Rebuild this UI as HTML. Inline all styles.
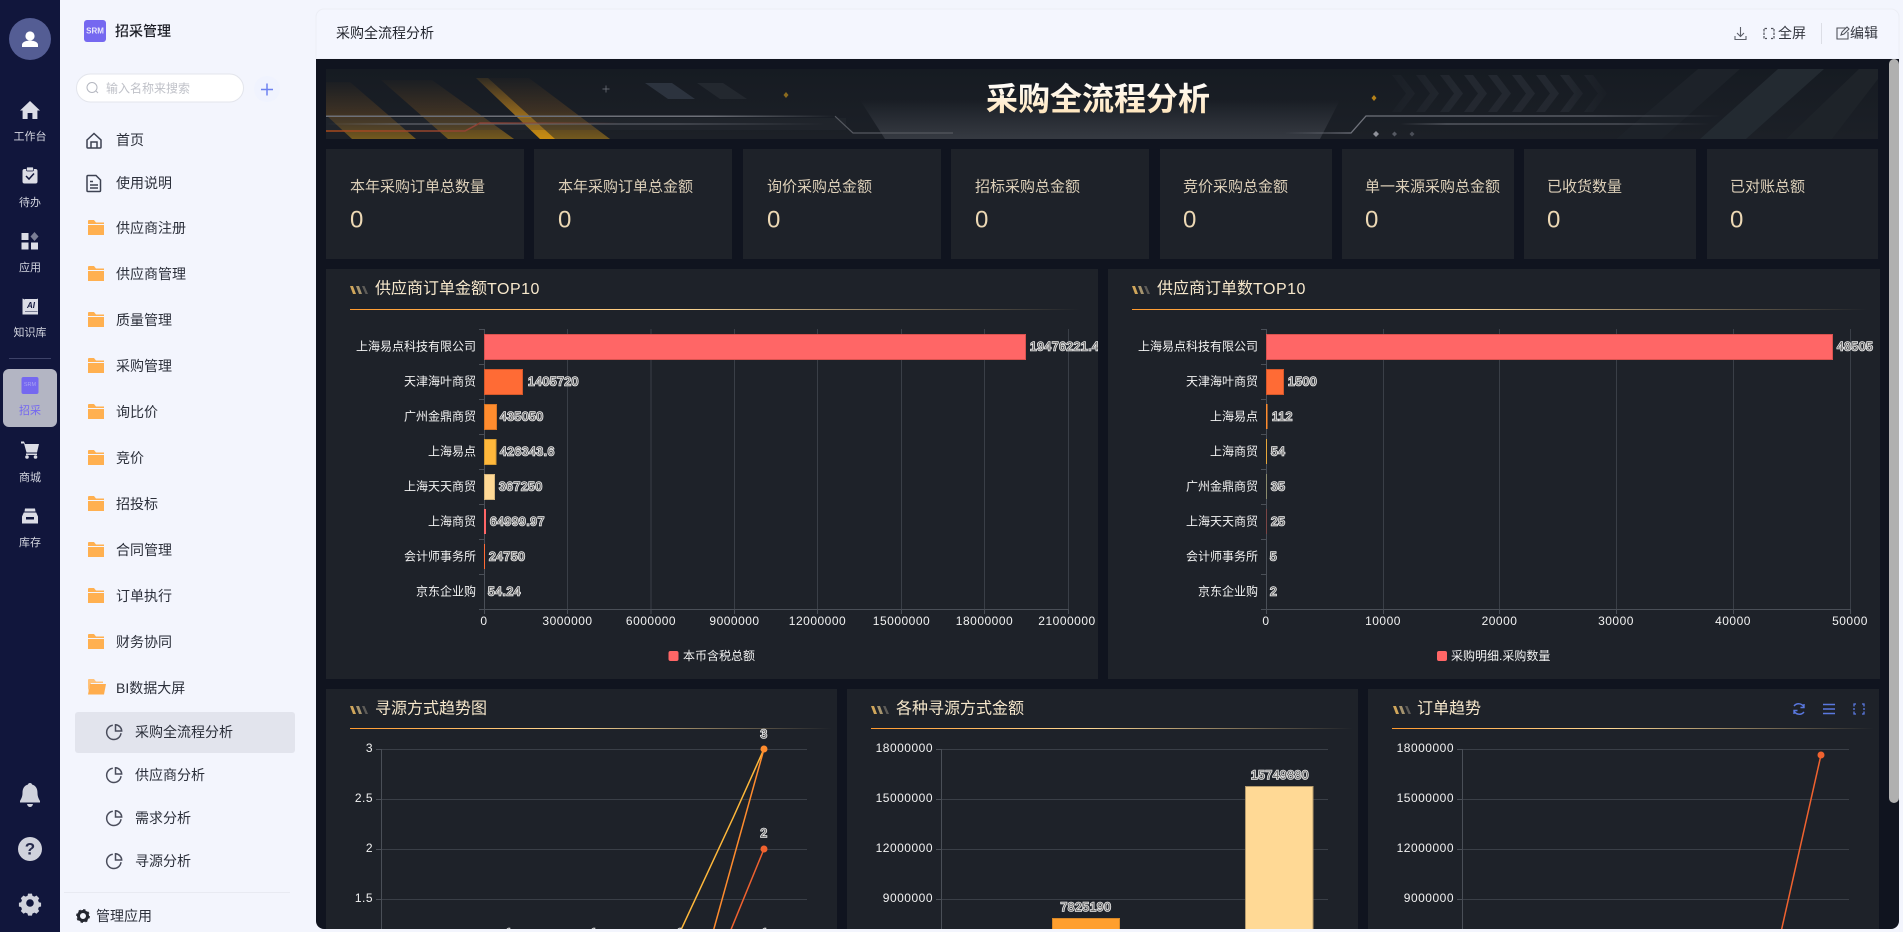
<!DOCTYPE html>
<html lang="zh-CN"><head><meta charset="utf-8"><title>采购全流程分析</title>
<style>
html,body{margin:0;padding:0;width:1903px;height:932px;overflow:hidden;background:#f3f5fd}
svg{display:block;font-family:"Liberation Sans","Noto Sans CJK SC",sans-serif}
text{dominant-baseline:central}
.rl{font-size:11px;fill:#d4d6e0;text-anchor:middle}
.m{font-size:14px;fill:#2b2f3a}
.cl{font-size:15px;fill:#dccfb8}
.cv{font-size:24px;fill:#ecd8b4}
.pt{font-size:16px;fill:#f7e8cc}
.al{font-size:12px;fill:#f2f2f2;text-anchor:end}
.ax{font-size:12px;fill:#f2f2f2;text-anchor:middle;letter-spacing:.5px}
.n{letter-spacing:.5px}
.v{font-size:12px;fill:#666;stroke:#eee;stroke-width:1.6px;paint-order:stroke;letter-spacing:.6px}
.c{text-anchor:middle}
.g{stroke:#3a3f47;stroke-width:1;fill:none}
.h{font-size:14px;fill:#33363f}
</style></head><body>
<svg width="1903" height="932" viewBox="0 0 1903 932" xmlns="http://www.w3.org/2000/svg">
<defs>
<symbol id="fo" viewBox="0 0 16 15" overflow="visible"><path d="M0 1a1 1 0 0 1 1-1h5l2 2.5h8V4H0z" fill="#ffb050"/><rect y="5" width="16" height="10" fill="#ffb050"/></symbol>
<symbol id="pi" viewBox="0 0 16 16" overflow="visible"><g fill="none" stroke="#4a4d5c" stroke-width="1.5"><path d="M6.8 1.2A7.2 7.2 0 1 0 15 9.2"/><path d="M9.5.8v6.2h6.2A6.4 6.4 0 0 0 9.5.8z"/></g></symbol>
<symbol id="ti" viewBox="0 0 19 8" overflow="visible"><path d="M0 0h3l3 8H3z" fill="#d0a65a"/><path d="M6 0h3l3 8H9z" fill="#a5946f"/><path d="M12 0h2.5l3.5 8h-2.5z" fill="#5e5c58"/></symbol>
<linearGradient id="ln" x1="0" x2="1" y1="0" y2="0"><stop offset="0" stop-color="#ff9a2e"/><stop offset=".45" stop-color="#ffd995"/><stop offset="1" stop-color="#ffd995" stop-opacity="0"/></linearGradient>
<linearGradient id="am" x1="0" x2="0" y1="0" y2="1"><stop offset="0" stop-color="#8a5a20" stop-opacity=".04"/><stop offset=".55" stop-color="#8a5a20" stop-opacity=".32"/><stop offset="1" stop-color="#96701a" stop-opacity=".72"/></linearGradient>
<linearGradient id="am2" x1="0" x2="0" y1="0" y2="1"><stop offset="0" stop-color="#c98a20" stop-opacity=".12"/><stop offset="1" stop-color="#d9960f" stop-opacity=".85"/></linearGradient>
<linearGradient id="gl" x1="0" x2="0" y1="0" y2="1"><stop offset="0" stop-color="#3c4149" stop-opacity="0"/><stop offset="1" stop-color="#3a3e46" stop-opacity=".85"/></linearGradient>
<linearGradient id="fr" x1="0" x2="1" y1="0" y2="0"><stop offset="0" stop-color="#6d7078"/><stop offset=".75" stop-color="#6d7078"/><stop offset="1" stop-color="#6d7078" stop-opacity="0"/></linearGradient>
<linearGradient id="fl" x1="0" x2="1" y1="0" y2="0"><stop offset="0" stop-color="#70737c" stop-opacity="0"/><stop offset=".15" stop-color="#70737c"/><stop offset=".7" stop-color="#62656e"/><stop offset="1" stop-color="#62656e" stop-opacity="0"/></linearGradient>
<linearGradient id="rd" x1="0" x2="1" y1="0" y2="0"><stop offset="0" stop-color="#a84a1c"/><stop offset=".5" stop-color="#8f4234"/><stop offset="1" stop-color="#8f4234" stop-opacity="0"/></linearGradient>
<linearGradient id="tc" x1="0" x2="0" y1="0" y2="1"><stop offset="0" stop-color="#fff"/><stop offset="1" stop-color="#ffe3b5"/></linearGradient>
<linearGradient id="sh" x1="0" x2="0" y1="0" y2="1"><stop offset="0" stop-color="#161b22"/><stop offset="1" stop-color="#1c2027"/></linearGradient>
<linearGradient id="chv" x1="0" x2="1" y1="0" y2="0"><stop offset="0" stop-color="#262b33" stop-opacity=".2"/><stop offset=".3" stop-color="#262b33" stop-opacity=".8"/><stop offset=".8" stop-color="#262b33" stop-opacity=".8"/><stop offset="1" stop-color="#262b33" stop-opacity=".1"/></linearGradient>
<clipPath id="mc"><path d="M316 59H1899V921a8 8 0 0 1-8 8H324a8 8 0 0 1-8-8z"/></clipPath>
<clipPath id="p1"><rect x="326" y="269" width="772" height="410"/></clipPath>
<clipPath id="bn"><rect x="326" y="69" width="1552" height="70"/></clipPath>
</defs>

<!-- rail -->
<rect width="60" height="932" fill="#11163c"/>
<circle cx="30" cy="39" r="21" fill="#545d94"/>
<circle cx="30" cy="36" r="4.6" fill="#fff"/><path d="M22 47v-2.2c0-2.6 3.5-4.2 8-4.2s8 1.6 8 4.2V47z" fill="#fff"/>
<path d="M30 101l10 9.5h-2.6V119h-5v-6h-4.8v6h-5v-8.500H20z" fill="#dcdde6"/>
<text class="rl" x="30" y="137">工作台</text>
<rect x="22.500" y="169" width="15" height="14.500" rx="2" fill="#dcdde6"/><rect x="26.500" y="167" width="7" height="4" rx="1" fill="#dcdde6" stroke="#11163c" stroke-width=".7"/><path d="M26 176l3 3 5-5.500" fill="none" stroke="#11163c" stroke-width="1.500"/>
<text class="rl" x="30" y="203">待办</text>
<rect x="21.500" y="233" width="7" height="7" fill="#dcdde6"/><rect x="21.500" y="242.500" width="7" height="7" fill="#dcdde6"/><rect x="31" y="242.500" width="7" height="7" fill="#dcdde6"/><path d="M34.500 232l4 4.500-4 4.500-4-4.500z" fill="#7b7e95"/>
<text class="rl" x="30" y="268">应用</text>
<path d="M22.500 298.500l2.500 1v12h12.500v-13h.5v16H22.500z" fill="#dcdde6"/><rect x="25" y="299" width="12.500" height="12" fill="#dcdde6"/><text x="31" y="305.500" font-size="8" font-weight="700" font-style="italic" fill="#11163c" text-anchor="middle">AI</text>
<text class="rl" x="30" y="333">知识库</text>
<rect x="9" y="358" width="42" height="1" fill="#3d4268"/>
<rect x="3" y="369" width="54" height="58" rx="6" fill="#b3b5c3"/>
<rect x="21.500" y="377" width="17" height="17" rx="2" fill="#7568f0"/><text x="30" y="385" font-size="5.500" fill="#a9a4f2" text-anchor="middle">SRM</text>
<text class="rl" x="30" y="411" style="fill:#7568f0">招采</text>
<path d="M21 441.500h3l1 2.500h14l-2 8.500H26.500l-2.500-9H21z" fill="#dcdde6"/><circle cx="27" cy="457" r="1.800" fill="#dcdde6"/><circle cx="35.500" cy="457" r="1.800" fill="#dcdde6"/><rect x="26" y="453.500" width="11" height="1.500" fill="#dcdde6"/>
<text class="rl" x="30" y="478">商城</text>
<path d="M25 508.500h10l.5 3h-11zM23.800 512.500h12.400l1.800 4v7H22v-7zM26 517v2.500h8V517h-8z" fill="#dcdde6" fill-rule="evenodd"/>
<text class="rl" x="30" y="543">库存</text>
<path d="M30 783c-1.500 0-2 1-2 1.500-3.800 1-5.500 4-5.500 8.500 0 4-1.500 6-2.500 8v1.500h20V801c-1-2-2.500-4-2.500-8 0-4.500-1.700-7.500-5.500-8.500 0-.5-.5-1.500-2-1.500z" fill="#d0d2dc"/><path d="M27 804h6c-.5 2-1.500 3-3 3s-2.500-1-3-3z" fill="#d0d2dc"/>
<circle cx="30" cy="849" r="12" fill="#d0d2dc"/><text x="30" y="849" font-size="17" font-weight="700" fill="#262a4c" text-anchor="middle">?</text>
<g fill="#d0d2dc"><path d="M27.500 892.500h5l.7 2.800 2.600 1.100 2.500-1.500 3.500 3.500-1.500 2.500 1.100 2.600 2.800.7v4.800l-2.800.7-1.100 2.600 1.500 2.500-3.500 3.500-2.500-1.500-2.600 1.100-.7 2.800h-5l-.7-2.800-2.600-1.100-2.500 1.500-3.500-3.500 1.500-2.500-1.100-2.600-2.800-.7v-4.800l2.800-.7 1.100-2.600-1.500-2.500 3.500-3.500 2.500 1.500 2.600-1.100z" transform="translate(30 903) scale(.78) translate(-30 -904.500)"/></g><circle cx="30" cy="903" r="3.800" fill="#11163c"/>

<!-- sidebar -->
<rect x="60" width="256" height="932" fill="#f3f5fd"/>
<rect x="84" y="20" width="22" height="22" rx="3" fill="#7568f0"/><text x="95" y="31" font-size="8" font-weight="700" fill="#e8e6fc" text-anchor="middle">SRM</text>
<text x="115" y="31" font-size="14" fill="#1c1e26" font-weight="500">招采管理</text>
<rect x="76.500" y="74" width="167" height="28" rx="14" fill="#fff" stroke="#e3e5ec"/>
<circle cx="92" cy="87.500" r="5" fill="none" stroke="#b4b7c0" stroke-width="1"/><path d="M96 91l2 2" stroke="#b4b7c0"/>
<text x="106" y="88.500" font-size="12" fill="#bfc1c8">输入名称来搜索</text>
<circle cx="267" cy="89" r="13" fill="#f0f3fe"/><path d="M261 89.500h12M267 83.500v12" stroke="#6d82f0" stroke-width="1.500"/>
<path d="M87 140l7-6.500 7 6.500v7a1 1 0 0 1-1 1h-12a1 1 0 0 1-1-1z M91 148v-6h6v6" fill="none" stroke="#3d4252" stroke-width="1.500"/>
<text class="m" x="116" y="140">首页</text>
<path d="M88 176h8l4.500 4.500v10.500a1 1 0 0 1-1 1h-11.500a1 1 0 0 1-1-1v-14a1 1 0 0 1 1-1zM90 182h3M90 185.500h8M90 188.500h8" fill="none" stroke="#3d4252" stroke-width="1.500" transform="translate(0 -.500)"/>
<text class="m" x="116" y="183">使用说明</text>
<use href="#fo" x="88" y="220" width="16" height="15"/><text class="m" x="116" y="228">供应商注册</text>
<use href="#fo" x="88" y="266" width="16" height="15"/><text class="m" x="116" y="274">供应商管理</text>
<use href="#fo" x="88" y="312" width="16" height="15"/><text class="m" x="116" y="320">质量管理</text>
<use href="#fo" x="88" y="358" width="16" height="15"/><text class="m" x="116" y="366">采购管理</text>
<use href="#fo" x="88" y="404" width="16" height="15"/><text class="m" x="116" y="412">询比价</text>
<use href="#fo" x="88" y="450" width="16" height="15"/><text class="m" x="116" y="458">竞价</text>
<use href="#fo" x="88" y="496" width="16" height="15"/><text class="m" x="116" y="504">招投标</text>
<use href="#fo" x="88" y="542" width="16" height="15"/><text class="m" x="116" y="550">合同管理</text>
<use href="#fo" x="88" y="588" width="16" height="15"/><text class="m" x="116" y="596">订单执行</text>
<use href="#fo" x="88" y="634" width="16" height="15"/><text class="m" x="116" y="642">财务协同</text>
<path d="M88 680a1 1 0 0 1 1-1h5l2 2.500h7v1.500H91l-3 8z" fill="#ffc27a"/><path d="M90 684h16l-2 10.500H88z" fill="#ffad4d"/>
<text class="m" x="116" y="688">BI数据大屏</text>
<rect x="75" y="712" width="220" height="41" rx="3" fill="#e2e4ed"/>
<use href="#pi" x="106" y="724" width="16" height="16"/><text class="m" x="135" y="732">采购全流程分析</text>
<use href="#pi" x="106" y="767" width="16" height="16"/><text class="m" x="135" y="775">供应商分析</text>
<use href="#pi" x="106" y="810" width="16" height="16"/><text class="m" x="135" y="818">需求分析</text>
<use href="#pi" x="106" y="853" width="16" height="16"/><text class="m" x="135" y="861">寻源分析</text>
<rect x="64" y="892" width="226" height="1" fill="#e8eaf2"/>
<circle cx="83" cy="916" r="4.500" fill="none" stroke="#23262f" stroke-width="3"/><circle cx="83" cy="916" r="6" fill="none" stroke="#23262f" stroke-width="1.800" stroke-dasharray="2.300 2.400"/>
<text class="m" x="96" y="916">管理应用</text>

<!-- header -->
<path d="M316 59V17a8 8 0 0 1 8-8h1567a8 8 0 0 1 8 8v42z" fill="#f4f6fe" stroke="#eceef5"/>
<text class="h" x="336" y="33" style="fill:#23262f">采购全流程分析</text>
<path d="M1740.500 27v9M1737 33l3.500 3.500 3.500-3.500M1735 36v3.500h11V36" fill="none" stroke="#5c5f68" stroke-width="1.100"/>
<path d="M1767 28.500h-3v10h3M1771 28.500h3v10h-3" fill="none" stroke="#4f525b" stroke-width="1.200" stroke-dasharray="2.500 1"/>
<text class="h" x="1778" y="33">全屏</text>
<rect x="1821" y="23" width="1" height="21" fill="#dcdee6"/>
<path d="M1846 28h-9v11h11v-7M1841 35l1-3 5-5 2 2-5 5z" fill="none" stroke="#4f525b" stroke-width="1.100"/>
<text class="h" x="1850" y="33">编辑</text>

<!-- main -->
<g clip-path="url(#mc)">
<rect x="316" y="59" width="1583" height="870" fill="#10141f"/>
<rect x="326" y="69" width="1552" height="70" fill="url(#sh)"/>
<g clip-path="url(#bn)">
<path d="M326 82h24l66 57h-64l-26-24z" fill="url(#am)"/>
<path d="M381 80h51l82 59h-66z" fill="url(#am)"/>
<path d="M476 78h53l81 61h-70z" fill="url(#am)"/>
<path d="M476 78h12l67 61h-15z" fill="url(#am2)"/>
<path d="M860 100h480l-20 39H885z" fill="url(#gl)"/>
<path d="M645 83h27l23 16h-27z" fill="#2c333e"/><path d="M697 83h26l24 16h-27z" fill="#23282f"/>
<path d="M606 85.500v7M602.500 89h7" stroke="#777a83" stroke-width=".7"/>
<path d="M786 92l2.500 3-2.500 3-2.500-3z" fill="#8a6a1e"/><path d="M1374 95l2.500 3-2.500 3-2.500-3z" fill="#b5821a"/>
<path d="M1376 131l3 3-3 3-3-3z" fill="#8f929a"/><path d="M1394.500 131.500l2.500 2.500-2.500 2.500-2.500-2.500z" fill="#555962"/><path d="M1412 131.500l2.500 2.500-2.500 2.500-2.500-2.500z" fill="#4a4e57"/>
<path d="M1392 75l14 18.500-14 18.500h9l14-18.500-14-18.500zM1416 75l14 18.500-14 18.500h9l14-18.500-14-18.500zM1440 75l14 18.500-14 18.500h9l14-18.500-14-18.500zM1464 75l14 18.500-14 18.500h9l14-18.500-14-18.500zM1488 75l14 18.500-14 18.500h9l14-18.500-14-18.500zM1512 75l14 18.500-14 18.500h9l14-18.500-14-18.500zM1536 75l14 18.500-14 18.500h9l14-18.500-14-18.500zM1560 75l14 18.500-14 18.500h9l14-18.500-14-18.500zM1584 75l14 18.500-14 18.500h9l14-18.500-14-18.500z" fill="url(#chv)"/>
<path d="M1698 69h42l-78 70h-46z" fill="#1d2229"/><path d="M1778 69h46l-78 70h-46z" fill="#232a31"/><path d="M1859 69h19v10l-46 60h-46z" fill="#1e2329"/>
<rect x="326" y="118" width="520" height="12" fill="#2e323a" opacity=".25"/>
<rect x="326" y="115.500" width="509" height="1.500" fill="url(#fr)"/>
<path d="M835 116.200l18 16.800h100" fill="none" stroke="#55585f" stroke-width="1.200"/>
<rect x="326" y="123.500" width="500" height="1" fill="url(#fl)"/>
<path d="M326 131h139l15-8h140" fill="none" stroke="url(#rd)" stroke-width="1.500"/>
<path d="M1284 133h67l15-17h355" fill="none" stroke="url(#fl)" stroke-width="1.300"/>
<rect x="1400" y="123.500" width="310" height="1" fill="url(#fl)"/>
</g>
<text x="1098" y="99" font-size="32" font-weight="700" fill="url(#tc)" text-anchor="middle">采购全流程分析</text>

<!-- cards -->
<g fill="#1e2229">
<rect x="326" y="149" width="198" height="110"/><rect x="534" y="149" width="198" height="110"/><rect x="743" y="149" width="198" height="110"/><rect x="951" y="149" width="198" height="110"/><rect x="1160" y="149" width="172" height="110"/><rect x="1342" y="149" width="172" height="110"/><rect x="1524" y="149" width="172" height="110"/><rect x="1707" y="149" width="171" height="110"/>
</g>
<text class="cl" x="350" y="187">本年采购订单总数量</text><text class="cv" x="350" y="220">0</text>
<text class="cl" x="558" y="187">本年采购订单总金额</text><text class="cv" x="558" y="220">0</text>
<text class="cl" x="767" y="187">询价采购总金额</text><text class="cv" x="767" y="220">0</text>
<text class="cl" x="975" y="187">招标采购总金额</text><text class="cv" x="975" y="220">0</text>
<text class="cl" x="1183" y="187">竞价采购总金额</text><text class="cv" x="1183" y="220">0</text>
<text class="cl" x="1365" y="187">单一来源采购总金额</text><text class="cv" x="1365" y="220">0</text>
<text class="cl" x="1547" y="187">已收货数量</text><text class="cv" x="1547" y="220">0</text>
<text class="cl" x="1730" y="187">已对账总额</text><text class="cv" x="1730" y="220">0</text>

<!-- panel 1 -->
<rect x="326" y="269" width="772" height="410" fill="#1e2229"/>
<use href="#ti" x="350" y="286" width="19" height="8"/>
<text class="pt" x="375" y="289">供应商订单金额<tspan letter-spacing=".5">TOP10</tspan></text>
<rect x="350" y="309" width="730" height="1" fill="url(#ln)"/>
<g clip-path="url(#p1)">
<path class="g" d="M567.500 329v280M651 329v280M734.500 329v280M817.500 329v280M901.500 329v280M984.500 329v280M1068.500 329v280"/>
<path d="M484.500 329v280M484 609.500h585M479 329.500h5M479 364.500h5M479 399.500h5M479 434.500h5M479 469.500h5M479 504.500h5M479 539.500h5M479 574.500h5M479 609.500h5M484.500 609v5M567.500 609v5M651 609v5M734.500 609v5M817.500 609v5M901.500 609v5M984.500 609v5M1068.500 609v5" stroke="#4a4f57" fill="none"/>
<rect x="484.500" y="334.500" width="541" height="25" fill="#ff6666" stroke="#d9534f"/>
<rect x="484.500" y="369.500" width="38" height="25" fill="#ff6b35" stroke="#d4592b"/>
<rect x="484.500" y="404.500" width="12" height="25" fill="#ff8c2e" stroke="#d77626"/>
<rect x="484.500" y="439.500" width="11.500" height="25" fill="#ffb83b" stroke="#d59a32"/>
<rect x="484.500" y="474.500" width="10" height="25" fill="#ffd995" stroke="#d6b67d"/>
<rect x="484" y="509" width="2" height="25" fill="#ff6666"/>
<rect x="484" y="544" width="1" height="25" fill="#ff6b35"/>
<text class="al" x="476" y="346.500">上海易点科技有限公司</text><text class="al" x="476" y="381.500">天津海叶商贸</text><text class="al" x="476" y="416.500">广州金鼎商贸</text><text class="al" x="476" y="451.500">上海易点</text><text class="al" x="476" y="486.500">上海天天商贸</text><text class="al" x="476" y="521.500">上海商贸</text><text class="al" x="476" y="556.500">会计师事务所</text><text class="al" x="476" y="591.500">京东企业购</text>
<text class="v" x="1030" y="346.500">19476221.4</text><text class="v" x="528" y="381.500">1405720</text><text class="v" x="500" y="416.500">435050</text><text class="v" x="500" y="451.500">426343.6</text><text class="v" x="499" y="486.500">367250</text><text class="v" x="490" y="521.500">64999.97</text><text class="v" x="489" y="556.500">24750</text><text class="v" x="488" y="591.500">54.24</text>
<text class="ax" x="484" y="621">0</text><text class="ax" x="567.500" y="621">3000000</text><text class="ax" x="651" y="621">6000000</text><text class="ax" x="734.500" y="621">9000000</text><text class="ax" x="817.500" y="621">12000000</text><text class="ax" x="901.500" y="621">15000000</text><text class="ax" x="984.500" y="621">18000000</text><text class="ax" x="1067" y="621">21000000</text>
<rect x="668.500" y="651" width="10" height="10" rx="2" fill="#ff6666"/><text x="683" y="656" font-size="12" fill="#f2f2f2">本币含税总额</text>
</g>

<!-- panel 2 -->
<rect x="1108" y="269" width="772" height="410" fill="#1e2229"/>
<use href="#ti" x="1132" y="286" width="19" height="8"/>
<text class="pt" x="1157" y="289">供应商订单数<tspan letter-spacing=".5">TOP10</tspan></text>
<rect x="1132" y="309" width="735" height="1" fill="url(#ln)"/>
<path class="g" d="M1383.500 329v280M1499.500 329v280M1616.500 329v280M1733.500 329v280M1850.500 329v280"/>
<path d="M1266.500 329v280M1266 609.500h585M1261 329.500h5M1261 364.500h5M1261 399.500h5M1261 434.500h5M1261 469.500h5M1261 504.500h5M1261 539.500h5M1261 574.500h5M1261 609.500h5M1266.500 609v5M1383.500 609v5M1499.500 609v5M1616.500 609v5M1733.500 609v5M1850.500 609v5" stroke="#4a4f57" fill="none"/>
<rect x="1266.500" y="334.500" width="566" height="25" fill="#ff6666" stroke="#d9534f"/>
<rect x="1266.500" y="369.500" width="17" height="25" fill="#ff6b35" stroke="#d4592b"/>
<rect x="1266" y="404" width="1.500" height="25" fill="#ff8c2e"/>
<rect x="1266" y="439" width="1" height="25" fill="#e6a73a"/>
<rect x="1266" y="474" width="1" height="25" fill="#8a8a6c"/>
<rect x="1266" y="509" width="1" height="25" fill="#7a4545"/>
<text class="al" x="1258" y="346.500">上海易点科技有限公司</text><text class="al" x="1258" y="381.500">天津海叶商贸</text><text class="al" x="1258" y="416.500">上海易点</text><text class="al" x="1258" y="451.500">上海商贸</text><text class="al" x="1258" y="486.500">广州金鼎商贸</text><text class="al" x="1258" y="521.500">上海天天商贸</text><text class="al" x="1258" y="556.500">会计师事务所</text><text class="al" x="1258" y="591.500">京东企业购</text>
<text class="v" x="1837" y="346.500">48505</text><text class="v" x="1288" y="381.500">1500</text><text class="v" x="1272" y="416.500">112</text><text class="v" x="1271" y="451.500">54</text><text class="v" x="1271" y="486.500">35</text><text class="v" x="1271" y="521.500">25</text><text class="v" x="1270" y="556.500">5</text><text class="v" x="1270" y="591.500">2</text>
<text class="ax" x="1266" y="621">0</text><text class="ax" x="1383" y="621">10000</text><text class="ax" x="1499.500" y="621">20000</text><text class="ax" x="1616" y="621">30000</text><text class="ax" x="1733" y="621">40000</text><text class="ax" x="1850" y="621">50000</text>
<rect x="1437" y="651" width="10" height="10" rx="2" fill="#ff6666"/><text x="1451" y="656" font-size="12" fill="#f2f2f2">采购明细.采购数量</text>

<!-- panel 3 -->
<rect x="326" y="689" width="511" height="245" fill="#1e2229"/>
<use href="#ti" x="350" y="706" width="19" height="8"/>
<text class="pt" x="375" y="709">寻源方式趋势图</text>
<rect x="350" y="728" width="482" height="1" fill="url(#ln)"/>
<path class="g" d="M381 749.500h426M381 799.500h426M381 849.500h426M381 899.500h426"/>
<path d="M381.500 749v190M376 749.500h5M376 799.500h5M376 849.500h5M376 899.500h5" stroke="#4a4f57" fill="none"/>
<text class="al n" x="373" y="748">3</text><text class="al n" x="373" y="798">2.5</text><text class="al n" x="373" y="848">2</text><text class="al n" x="373" y="898">1.5</text>
<path d="M764 749L733 818 680 932" fill="none" stroke="#ffb83b" stroke-width="1.500"/>
<path d="M764 749L713 932" fill="none" stroke="#ff8c2e" stroke-width="1.500"/>
<path d="M764 849L730 932" fill="none" stroke="#f0622f" stroke-width="1.500"/>
<circle cx="764" cy="749" r="3.500" fill="#ff8c2e"/><circle cx="764" cy="849" r="3.500" fill="#f0622f"/>
<text class="v c" x="764" y="734">3</text><text class="v c" x="764" y="833">2</text>
<text class="v c" x="509" y="933">1</text><text class="v c" x="594" y="933">1</text><text class="v c" x="680" y="933">1</text><text class="v c" x="765" y="933">1</text>

<!-- panel 4 -->
<rect x="847" y="689" width="511" height="245" fill="#1e2229"/>
<use href="#ti" x="871" y="706" width="19" height="8"/>
<text class="pt" x="896" y="709">各种寻源方式金额</text>
<rect x="871" y="728" width="482" height="1" fill="url(#ln)"/>
<path class="g" d="M941 749.500h387M941 799.500h387M941 849.500h387M941 899.500h387"/>
<path d="M941.500 749v190M936 749.500h5M936 799.500h5M936 849.500h5M936 899.500h5" stroke="#4a4f57" fill="none"/>
<text class="al n" x="933" y="748">18000000</text><text class="al n" x="933" y="798">15000000</text><text class="al n" x="933" y="848">12000000</text><text class="al n" x="933" y="898">9000000</text>
<rect x="1052.500" y="918.500" width="67" height="20" fill="#ff9f2e" stroke="#d98826"/>
<rect x="1245.500" y="786.500" width="67.500" height="150" fill="#ffd995" stroke="#b59a6c"/>
<text class="v c" x="1086" y="907">7825190</text><text class="v c" x="1280" y="775">15749880</text>

<!-- panel 5 -->
<rect x="1368" y="689" width="511" height="245" fill="#1e2229"/>
<use href="#ti" x="1393" y="706" width="19" height="8"/>
<text class="pt" x="1417" y="709">订单趋势</text>
<rect x="1392" y="728" width="482" height="1" fill="url(#ln)"/>
<g fill="none" stroke="#5a78e0" stroke-width="1.400">
<path d="M1794 706a6 6 0 0 1 10 1M1804 704v3.500h-3.500M1804 712a6 6 0 0 1-10-1M1794 714v-3.500h3.500"/>
<path d="M1823 704.500h12M1823 709h12M1823 713.500h12"/>
<path d="M1856 704h-2v2.500M1862 704h2v2.500M1856 714h-2v-2.500M1862 714h2v-2.500M1854 708v2M1864 708v2" stroke-width="1.300"/>
</g>
<path class="g" d="M1462 749.500h387M1462 799.500h387M1462 849.500h387M1462 899.500h387"/>
<path d="M1462.500 749v190M1457 749.500h5M1457 799.500h5M1457 849.500h5M1457 899.500h5" stroke="#4a4f57" fill="none"/>
<text class="al n" x="1454" y="748">18000000</text><text class="al n" x="1454" y="798">15000000</text><text class="al n" x="1454" y="848">12000000</text><text class="al n" x="1454" y="898">9000000</text>
<path d="M1821 755L1781 932" fill="none" stroke="#f0622f" stroke-width="1.500"/>
<circle cx="1821" cy="755" r="3.500" fill="#f0622f"/>

<!-- scrollbar -->
<rect x="1889" y="59" width="10" height="744" rx="5" fill="#b0b0b0"/>
</g>
</svg>
</body></html>
